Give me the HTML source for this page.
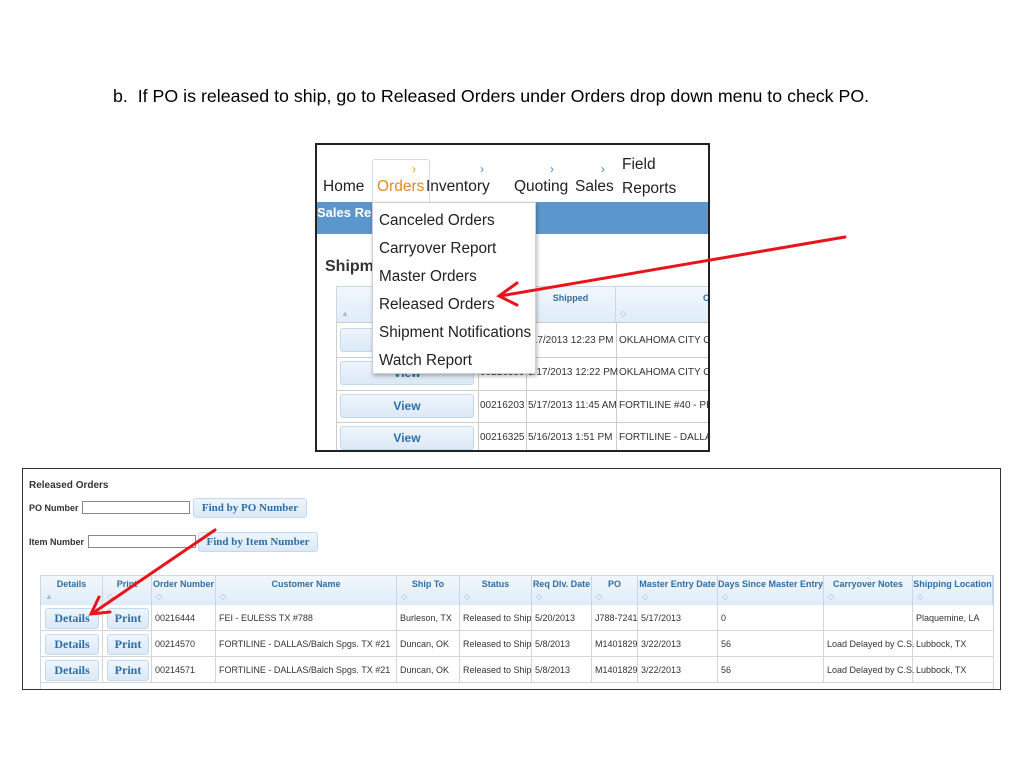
<!DOCTYPE html>
<html><head><meta charset="utf-8"><style>
*{margin:0;padding:0;box-sizing:border-box}
body{width:1024px;height:768px;background:#fff;position:relative;overflow:hidden;font-family:"Liberation Sans",sans-serif}
.a{position:absolute;white-space:nowrap}
.btn{position:absolute;background:linear-gradient(#eef5fc,#dce9f6);border:1px solid #c5d9ee;border-radius:3px;color:#2e6ea6;font-family:"Liberation Serif",serif;font-weight:bold;text-align:center}
.hd{position:absolute;background:linear-gradient(#f2f7fd,#dfecf8);color:#2e6ea6;font-weight:bold;font-size:9px;text-align:center;border-right:1px solid #c8d8e8}
.hd i{position:absolute;left:4px;top:16px;font-style:normal;color:#a8bccf;font-size:8px;font-weight:normal}
.cell{position:absolute;font-size:9px;color:#333;border-right:1px solid #d5d5d5;border-bottom:1px solid #d5d5d5;padding-left:3px}
.nv{position:absolute;font-size:15.5px;color:#222;white-space:nowrap}
.t{position:absolute;font-size:10px;color:#333;white-space:nowrap}
</style></head><body>
<div class="a" style="left:113px;top:86px;font-size:17.8px;color:#000">b.&nbsp; If PO is released to ship, go to Released Orders under Orders drop down menu to check PO.</div>

<!-- top screenshot -->
<div class="a" style="left:315px;top:143px;width:395px;height:309px;border:2px solid #222;overflow:hidden;background:#fff">
  <div class="a" style="left:0;top:57px;width:395px;height:32px;background:#5b97cd"></div>
  <div class="a" style="left:0;top:60px;font-size:13px;font-weight:bold;color:#fff">Sales Rep</div>
  <div class="a" style="left:55px;top:14px;width:58px;height:46px;border:1px solid #d0dbe6;border-bottom:none;border-radius:3px 3px 0 0;background:#fff"></div>
  <div class="nv" style="left:6px;top:33px">Home</div>
  <div class="nv" style="left:60px;top:33px;color:#e08a1e">Orders</div>
  <div class="a" style="left:95px;top:17px;font-size:12px;color:#e0a020">›</div>
  <div class="a" style="left:163px;top:17px;font-size:12px;color:#3c8dcc">›</div>
  <div class="a" style="left:233px;top:17px;font-size:12px;color:#3c8dcc">›</div>
  <div class="a" style="left:284px;top:17px;font-size:12px;color:#3c8dcc">›</div>
  <div class="nv" style="left:109px;top:33px">Inventory</div>
  <div class="nv" style="left:197px;top:33px">Quoting</div>
  <div class="nv" style="left:258px;top:33px">Sales</div>
  <div class="nv" style="left:305px;top:8px;line-height:24px">Field<br>Reports</div>
  <div class="a" style="left:8px;top:113px;font-size:16px;font-weight:bold;color:#333">Shipme</div>
  <!-- table -->
  <div class="hd" style="left:19px;top:141px;width:142px;height:36px;border-left:1px solid #c8d8e8;border-top:1px solid #c8d8e8"><i style="top:22px">▲</i></div>
  <div class="hd" style="left:161px;top:141px;width:48px;height:36px;border-top:1px solid #c8d8e8"></div>
  <div class="hd" style="left:209px;top:141px;width:90px;height:36px;border-top:1px solid #c8d8e8;padding-top:6px">Shipped<i style="top:22px">◇</i></div>
  <div class="hd" style="left:299px;top:141px;width:100px;height:36px;border-top:1px solid #c8d8e8;padding-top:6px;text-align:right">Cu<i style="top:22px">◇</i></div>
  <div class="a" style="left:19px;top:177px;width:380px;height:1px;background:#ccc"></div>
  <div class="a" style="left:161px;top:177px;width:1px;height:140px;background:#ccc"></div>
  <div class="a" style="left:209px;top:177px;width:1px;height:140px;background:#ccc"></div>
  <div class="a" style="left:299px;top:177px;width:1px;height:140px;background:#ccc"></div>
  <div class="a" style="left:19px;top:177px;width:1px;height:140px;background:#ccc"></div>
  <div class="a" style="left:19px;top:212px;width:380px;height:1px;background:#ccc"></div>
  <div class="a" style="left:19px;top:245px;width:380px;height:1px;background:#ccc"></div>
  <div class="a" style="left:19px;top:277px;width:380px;height:1px;background:#ccc"></div>
  <div class="btn" style="left:23px;top:183px;width:134px;height:24px"></div>
  <div class="btn" style="left:23px;top:216px;width:134px;height:24px;font-family:'Liberation Sans',sans-serif;font-size:12px;line-height:22px">View</div>
  <div class="btn" style="left:23px;top:249px;width:134px;height:24px;font-family:'Liberation Sans',sans-serif;font-size:12px;line-height:22px">View</div>
  <div class="btn" style="left:23px;top:281px;width:134px;height:24px;font-family:'Liberation Sans',sans-serif;font-size:12px;line-height:22px">View</div>
  <div class="t" style="left:212px;top:190px">/17/2013 12:23 PM</div>
  <div class="t" style="left:302px;top:190px">OKLAHOMA CITY OK</div>
  <div class="t" style="left:163px;top:222px">00216390</div>
  <div class="t" style="left:211px;top:222px">5/17/2013 12:22 PM</div>
  <div class="t" style="left:302px;top:222px">OKLAHOMA CITY OK</div>
  <div class="t" style="left:163px;top:255px">00216203</div>
  <div class="t" style="left:211px;top:255px">5/17/2013 11:45 AM</div>
  <div class="t" style="left:302px;top:255px">FORTILINE #40 - PRO</div>
  <div class="t" style="left:163px;top:287px">00216325</div>
  <div class="t" style="left:211px;top:287px">5/16/2013 1:51 PM</div>
  <div class="t" style="left:302px;top:287px">FORTILINE - DALLAS</div>
  <!-- dropdown -->
  <div class="a" style="left:55px;top:57px;width:164px;height:172px;background:#fff;border:1px solid #ccd;box-shadow:1px 2px 4px rgba(0,0,0,.3);padding:4px 0 0 6px;font-size:15.3px;color:#222;line-height:28px">Canceled Orders<br>Carryover Report<br>Master Orders<br>Released Orders<br>Shipment Notifications<br>Watch Report</div>
</div>

<!-- bottom screenshot -->
<div class="a" style="left:22px;top:468px;width:979px;height:222px;border:1px solid #333;overflow:hidden;background:#fff">
  <div class="a" style="left:6px;top:11px;font-size:10px;font-weight:bold;color:#333">Released Orders</div>
  <div class="a" style="left:6px;top:34px;font-size:9px;font-weight:bold;color:#333">PO Number</div>
  <div class="a" style="left:59px;top:32px;width:108px;height:13px;border:1px solid #888"></div>
  <div class="btn" style="left:170px;top:29px;width:114px;height:20px;font-size:11px;line-height:18px">Find by PO Number</div>
  <div class="a" style="left:6px;top:68px;font-size:9px;font-weight:bold;color:#333">Item Number</div>
  <div class="a" style="left:65px;top:66px;width:108px;height:13px;border:1px solid #888"></div>
  <div class="btn" style="left:175px;top:63px;width:120px;height:20px;font-size:11px;line-height:18px">Find by Item Number</div>
  <div class="a" style="left:17px;top:106px;width:954px;height:115px;border:1px solid #c8d8e8"></div>
  <div class="hd" style="left:18px;top:107px;width:62px;height:29px;padding-top:3px">Details<i>▲</i></div>
  <div class="hd" style="left:80px;top:107px;width:49px;height:29px;padding-top:3px">Print<i>◇</i></div>
  <div class="hd" style="left:129px;top:107px;width:64px;height:29px;padding-top:3px">Order Number<i>◇</i></div>
  <div class="hd" style="left:193px;top:107px;width:181px;height:29px;padding-top:3px">Customer Name<i>◇</i></div>
  <div class="hd" style="left:374px;top:107px;width:63px;height:29px;padding-top:3px">Ship To<i>◇</i></div>
  <div class="hd" style="left:437px;top:107px;width:72px;height:29px;padding-top:3px">Status<i>◇</i></div>
  <div class="hd" style="left:509px;top:107px;width:60px;height:29px;padding-top:3px">Req Dlv. Date<i>◇</i></div>
  <div class="hd" style="left:569px;top:107px;width:46px;height:29px;padding-top:3px">PO<i>◇</i></div>
  <div class="hd" style="left:615px;top:107px;width:80px;height:29px;padding-top:3px">Master Entry Date<i>◇</i></div>
  <div class="hd" style="left:695px;top:107px;width:106px;height:29px;padding-top:3px">Days Since Master Entry<i>◇</i></div>
  <div class="hd" style="left:801px;top:107px;width:89px;height:29px;padding-top:3px">Carryover Notes<i>◇</i></div>
  <div class="hd" style="left:890px;top:107px;width:80px;height:29px;padding-top:3px">Shipping Location<i>◇</i></div>

  <div class="a" style="left:18px;top:136px;width:953px;">
    <div style="position:relative;height:26px">
      <div class="cell" style="left:0;width:62px;height:26px"></div><div class="cell" style="left:62px;width:49px;height:26px"></div>
      <div class="btn" style="left:4px;top:3px;width:54px;height:21px;font-size:12px;line-height:19px">Details</div>
      <div class="btn" style="left:66px;top:3px;width:42px;height:21px;font-size:12px;line-height:19px">Print</div>
      <div class="cell" style="left:111px;width:64px;height:26px;line-height:26px">00216444</div>
      <div class="cell" style="left:175px;width:181px;height:26px;line-height:26px">FEI - EULESS TX #788</div>
      <div class="cell" style="left:356px;width:63px;height:26px;line-height:26px">Burleson, TX</div>
      <div class="cell" style="left:419px;width:72px;height:26px;line-height:26px">Released to Ship</div>
      <div class="cell" style="left:491px;width:60px;height:26px;line-height:26px">5/20/2013</div>
      <div class="cell" style="left:551px;width:46px;height:26px;line-height:26px">J788-7241</div>
      <div class="cell" style="left:597px;width:80px;height:26px;line-height:26px">5/17/2013</div>
      <div class="cell" style="left:677px;width:106px;height:26px;line-height:26px">0</div>
      <div class="cell" style="left:783px;width:89px;height:26px;line-height:26px"></div>
      <div class="cell" style="left:872px;width:81px;height:26px;line-height:26px">Plaquemine, LA</div>
    </div>
    <div style="position:relative;height:26px">
      <div class="cell" style="left:0;width:62px;height:26px"></div><div class="cell" style="left:62px;width:49px;height:26px"></div>
      <div class="btn" style="left:4px;top:3px;width:54px;height:21px;font-size:12px;line-height:19px">Details</div>
      <div class="btn" style="left:66px;top:3px;width:42px;height:21px;font-size:12px;line-height:19px">Print</div>
      <div class="cell" style="left:111px;width:64px;height:26px;line-height:26px">00214570</div>
      <div class="cell" style="left:175px;width:181px;height:26px;line-height:26px">FORTILINE - DALLAS/Balch Spgs. TX #21</div>
      <div class="cell" style="left:356px;width:63px;height:26px;line-height:26px">Duncan, OK</div>
      <div class="cell" style="left:419px;width:72px;height:26px;line-height:26px">Released to Ship</div>
      <div class="cell" style="left:491px;width:60px;height:26px;line-height:26px">5/8/2013</div>
      <div class="cell" style="left:551px;width:46px;height:26px;line-height:26px">M1401829</div>
      <div class="cell" style="left:597px;width:80px;height:26px;line-height:26px">3/22/2013</div>
      <div class="cell" style="left:677px;width:106px;height:26px;line-height:26px">56</div>
      <div class="cell" style="left:783px;width:89px;height:26px;line-height:26px">Load Delayed by C.S.</div>
      <div class="cell" style="left:872px;width:81px;height:26px;line-height:26px">Lubbock, TX</div>
    </div>
    <div style="position:relative;height:26px">
      <div class="cell" style="left:0;width:62px;height:26px"></div><div class="cell" style="left:62px;width:49px;height:26px"></div>
      <div class="btn" style="left:4px;top:3px;width:54px;height:21px;font-size:12px;line-height:19px">Details</div>
      <div class="btn" style="left:66px;top:3px;width:42px;height:21px;font-size:12px;line-height:19px">Print</div>
      <div class="cell" style="left:111px;width:64px;height:26px;line-height:26px">00214571</div>
      <div class="cell" style="left:175px;width:181px;height:26px;line-height:26px">FORTILINE - DALLAS/Balch Spgs. TX #21</div>
      <div class="cell" style="left:356px;width:63px;height:26px;line-height:26px">Duncan, OK</div>
      <div class="cell" style="left:419px;width:72px;height:26px;line-height:26px">Released to Ship</div>
      <div class="cell" style="left:491px;width:60px;height:26px;line-height:26px">5/8/2013</div>
      <div class="cell" style="left:551px;width:46px;height:26px;line-height:26px">M1401829</div>
      <div class="cell" style="left:597px;width:80px;height:26px;line-height:26px">3/22/2013</div>
      <div class="cell" style="left:677px;width:106px;height:26px;line-height:26px">56</div>
      <div class="cell" style="left:783px;width:89px;height:26px;line-height:26px">Load Delayed by C.S.</div>
      <div class="cell" style="left:872px;width:81px;height:26px;line-height:26px">Lubbock, TX</div>
    </div>
  </div>
</div>

<svg class="a" style="left:0;top:0" width="1024" height="768">
  <g stroke="#e8141b" stroke-width="3" fill="none" stroke-linecap="round">
    <line x1="845" y1="237" x2="500" y2="296"/>
    <polyline points="517,283 499,296 517,305"/>
    <line x1="215" y1="530" x2="93" y2="613"/>
    <polyline points="99,597 91,614 110,612"/>
  </g>
</svg>
</body></html>
